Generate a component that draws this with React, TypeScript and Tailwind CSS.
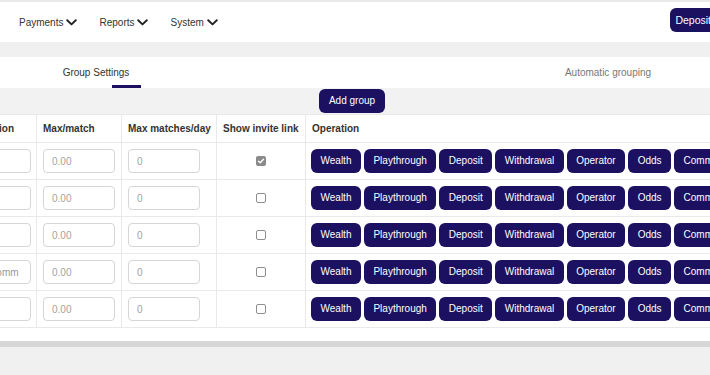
import React from 'react'

const NAV = ['Payments', 'Reports', 'System']
const OPS = ['Wealth', 'Playthrough', 'Deposit', 'Withdrawal', 'Operator', 'Odds', 'Commission', 'Delete']

const ROWS = [
  { name: '', checked: true },
  { name: '', checked: false },
  { name: '', checked: false },
  { name: 'High comm', checked: false },
  { name: '', checked: false },
]

const btnCls =
  'h-[24px] px-[9.5px] rounded-[6px] bg-[#1b1160] text-white text-[10px] leading-none whitespace-nowrap shrink-0'
const inputCls =
  'h-[24px] w-[72px] rounded-[4px] border border-[#d6d6d6] bg-white px-[8px] text-[10px] text-[#999] placeholder:text-[#a3a3a3] outline-none'
const cellCls = 'border border-[#e9e9e9] px-[6px] text-left whitespace-nowrap'

function Chevron() {
  return (
    <svg width="11" height="7" viewBox="0 0 11 7" fill="none" aria-hidden>
      <path d="M1.2 1.2 5.5 5.4 9.8 1.2" stroke="#222" strokeWidth={1.9} strokeLinecap="round" strokeLinejoin="round" />
    </svg>
  )
}

function Check({ on }: { on: boolean }) {
  return on ? (
    <span className="inline-flex w-[10px] h-[10px] rounded-[2px] bg-[#8a8a8a] items-center justify-center">
      <svg width="8" height="8" viewBox="0 0 8 8" fill="none">
        <path d="M1.5 4.2 3.2 5.8 6.5 2.2" stroke="#fff" strokeWidth={1.4} strokeLinecap="round" strokeLinejoin="round" />
      </svg>
    </span>
  ) : (
    <span className="inline-block w-[10px] h-[10px] rounded-[2px] border border-[#8f8f8f] bg-white" />
  )
}

export default function App() {
  return (
    <div className="w-[710px] h-[375px] overflow-hidden bg-[#f0f0f0] font-['Liberation_Sans',Arial,sans-serif] text-[#333]">
      {/* top strip */}
      <div className="h-[2px] bg-[#e9e9e9]" />

      {/* ── header ── */}
      <header className="h-[40px] bg-white flex items-center pl-[19px]">
        <nav className="flex items-center gap-[22px] text-[10px]">
          {NAV.map((n) => (
            <span key={n} className="flex items-center gap-[3px] whitespace-nowrap">
              {n}
              <Chevron />
            </span>
          ))}
        </nav>
        <button className="ml-auto -mr-[6px] self-start mt-[6px] h-[24px] px-[5px] rounded-[6px] bg-[#1b1160] text-white text-[10.5px] leading-none">
          Deposit
        </button>
      </header>

      <div className="h-[15px]" />

      {/* ── tabs + add group (page scrolled 160px) ── */}
      <div className="w-[1024px] -ml-[160px]">
        <div className="h-[31px] bg-white flex">
          <div className="w-[512px] flex flex-col items-center pt-[11px]">
            <span className="text-[10px] leading-none text-[#333]">Group Settings</span>
            <div className="mt-[7px] w-[29px] h-[3px] bg-[#1b1160] translate-x-[30px]" />
          </div>
          <div className="w-[512px] flex justify-center pt-[11px]">
            <span className="text-[10px] leading-none text-[#777]">Automatic grouping</span>
          </div>
        </div>
        <div className="h-[26px] bg-[#f2f2f2] flex justify-center pt-[1px]">
          <button className="h-[24px] px-[10px] rounded-[6px] bg-[#1b1160] text-white text-[10px] leading-none">
            Add group
          </button>
        </div>
      </div>

      {/* ── table ── */}
      <div className="bg-white overflow-hidden pb-[13px]">
        <table className="-ml-[48px] border-collapse table-fixed w-[1150px] text-[10px]">
          <colgroup>
            <col className="w-[84px]" />
            <col className="w-[85px]" />
            <col className="w-[95px]" />
            <col className="w-[89px]" />
            <col />
          </colgroup>
          <thead>
            <tr className="h-[28px] font-bold text-[#333]">
              <th className={cellCls}>Description</th>
              <th className={cellCls}>Max/match</th>
              <th className={cellCls}>Max matches/day</th>
              <th className={cellCls}>Show invite link</th>
              <th className={cellCls}>Operation</th>
            </tr>
          </thead>
          <tbody>
            {ROWS.map((r, i) => (
              <tr key={i} className="h-[37px]">
                <td className={cellCls}>
                  <input readOnly className={inputCls} defaultValue={r.name} />
                </td>
                <td className={cellCls}>
                  <input readOnly className={inputCls} placeholder="0.00" />
                </td>
                <td className={cellCls}>
                  <input readOnly className={inputCls} placeholder="0" />
                </td>
                <td className={`${cellCls} text-center`}>
                  <div className="flex justify-center">
                    <Check on={r.checked} />
                  </div>
                </td>
                <td className="border border-[#e9e9e9] pl-[5px] pr-[6px] whitespace-nowrap">
                  <div className="flex gap-[3px]">
                    {OPS.map((o) => (
                      <button key={o} className={btnCls}>
                        {o}
                      </button>
                    ))}
                  </div>
                </td>
              </tr>
            ))}
          </tbody>
        </table>
      </div>

      {/* scrollbar track */}
      <div className="h-[6px] bg-[#d6d6d6]" />
    </div>
  )
}
